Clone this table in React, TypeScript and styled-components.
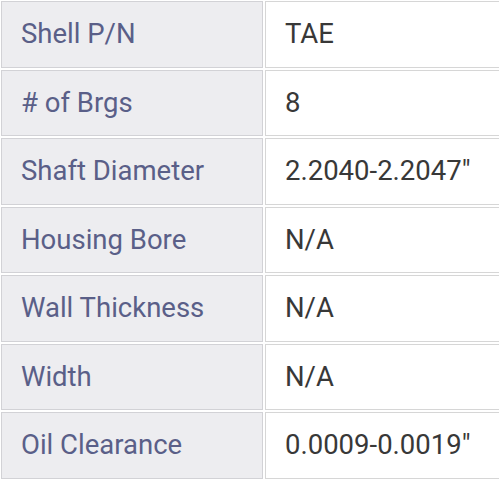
import { FC, Fragment } from 'react';
import styled, { createGlobalStyle } from 'styled-components';

const GlobalStyle = createGlobalStyle`
  html, body {
    margin: 0;
    padding: 0;
    background: #ffffff;
    font-family: Roboto, "Liberation Sans", sans-serif;
    overflow: hidden;
  }
`;

const SpecTable = styled.div`
  width: 520px;
  display: grid;
  grid-template-columns: 262px 1fr;
  grid-auto-rows: 66.5px;
  gap: 2px;
  padding: 1px 0 0 1px;
  background: #ffffff;
`;

const Cell = styled.div<{ $label?: boolean }>`
  display: flex;
  align-items: center;
  padding-left: 19px;
  padding-bottom: 1px;
  border: 1px solid ${(p) => (p.$label ? '#d2d2d6' : '#d6d6d6')};
  background: ${(p) => (p.$label ? '#ededf0' : '#ffffff')};
  color: ${(p) => (p.$label ? '#5a5f88' : '#383838')};
  font-size: 27.5px;
  white-space: nowrap;
  box-sizing: border-box;
`;

const rows: [string, string][] = [
  ['Shell P/N', 'TAE'],
  ['# of Brgs', '8'],
  ['Shaft Diameter', '2.2040-2.2047"'],
  ['Housing Bore', 'N/A'],
  ['Wall Thickness', 'N/A'],
  ['Width', 'N/A'],
  ['Oil Clearance', '0.0009-0.0019"'],
];

const App: FC = () => (
  <>
    <GlobalStyle />
    <SpecTable>
      {rows.map(([label, value]) => (
        <Fragment key={label}>
          <Cell $label>{label}</Cell>
          <Cell>{value}</Cell>
        </Fragment>
      ))}
    </SpecTable>
  </>
);

export default App;
